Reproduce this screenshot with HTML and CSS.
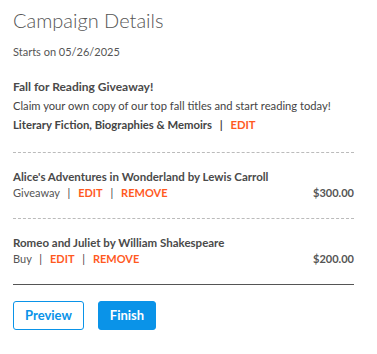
FILE: index.html
```html
<!DOCTYPE html>
<html>
<head>
<meta charset="utf-8">
<link rel="stylesheet" href="styles.css">
</head>
<body>
<div class="page">
  <h1 class="title">Campaign Details</h1>
  <p class="starts">Starts on 05/26/2025</p>
  <div class="campaign">
    <p class="camp-name">Fall for Reading Giveaway!</p>
    <p class="camp-desc">Claim your own copy of our top fall titles and start reading today!</p>
    <p class="camp-cats">Literary Fiction, Biographies &amp; Memoirs <span class="sep">|</span> <a class="action">EDIT</a></p>
  </div>
  <div class="item">
    <p class="item-title">Alice's Adventures in Wonderland by Lewis Carroll</p>
    <div class="item-row">
      <span class="item-meta">Giveaway <span class="sep">|</span> <a class="action">EDIT</a> <span class="sep">|</span> <a class="action">REMOVE</a></span>
      <span class="price">$300.00</span>
    </div>
  </div>
  <div class="item item-last">
    <p class="item-title">Romeo and Juliet by William Shakespeare</p>
    <div class="item-row">
      <span class="item-meta">Buy <span class="sep">|</span> <a class="action">EDIT</a> <span class="sep">|</span> <a class="action">REMOVE</a></span>
      <span class="price">$200.00</span>
    </div>
  </div>
  <div class="buttons">
    <button class="btn btn-outline">Preview</button>
    <button class="btn btn-primary">Finish</button>
  </div>
</div>
</body>
</html>
```
FILE: styles.css
```css
* { box-sizing: border-box; }
body {
  margin: 0;
  background: #fff;
  font-family: Lato, "Open Sans", sans-serif;
  color: #555;
}
.page {
  padding: 7px 23px 0 13px;
}
p { margin: 0; }
.title {
  margin: 0;
  font-size: 20px;
  font-weight: 300;
  line-height: 26px;
  color: #555;
}
.starts {
  margin-top: 12px;
  font-size: 11px;
  line-height: 14px;
  color: #555;
}
.campaign {
  margin-top: 17.5px;
  padding-bottom: 18px;
  border-bottom: 1px dashed #bbb;
}
.camp-name, .camp-desc, .camp-cats {
  line-height: 19px;
}
.camp-name {
  font-size: 12px;
  font-weight: 700;
  color: #4a4a4a;
}
.camp-desc {
  font-size: 11.2px;
  color: #444;
}
.camp-cats {
  font-size: 11.3px;
  font-weight: 700;
  color: #444;
}
.sep {
  margin: 0 5px;
  color: #444;
}
.action {
  color: #ff5a1f;
  font-weight: 700;
  text-transform: uppercase;
}
.item {
  padding: 16px 0 17px;
  border-bottom: 1px dashed #bbb;
}
.item-last {
  border-bottom: 1.5px solid #555;
}
.item-title {
  font-size: 11.5px;
  font-weight: 700;
  line-height: 16px;
  color: #4a4a4a;
}
.item-row {
  display: flex;
  justify-content: space-between;
  align-items: center;
  font-size: 11px;
  line-height: 16px;
}
.item-meta { color: #555; }
.price {
  font-weight: 700;
  color: #555;
}
.buttons {
  display: flex;
  gap: 14px;
  margin-top: 16px;
}
.btn {
  height: 29px;
  border-radius: 3px;
  font-family: inherit;
  font-size: 13px;
  font-weight: 700;
  padding: 0;
  cursor: pointer;
}
.btn-outline {
  width: 71px;
  background: #fff;
  border: 1px solid #0a93e8;
  color: #0a93e8;
}
.btn-primary {
  width: 58px;
  background: #0a93e8;
  border: 1px solid #0a93e8;
  color: #fff;
}
```
